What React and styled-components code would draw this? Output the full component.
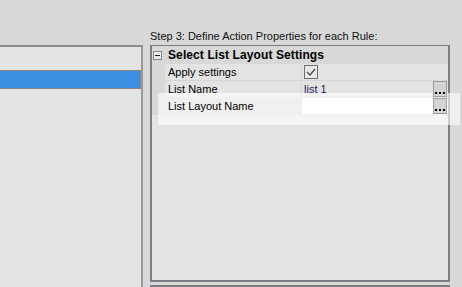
import React from "react";
import styled, { createGlobalStyle } from "styled-components";

const Global = createGlobalStyle`
  html, body {
    margin: 0;
    padding: 0;
    background: #d8d8d8;
    overflow: hidden;
  }
  body {
    font-family: "Liberation Sans", Arial, sans-serif;
    font-size: 11px;
    color: #000;
  }
`;

const Window = styled.div`
  position: relative;
  display: flex;
  align-items: flex-start;
  width: 462px;
  height: 287px;
  background: #d8d8d8;
  overflow: hidden;
`;

const RulesPanel = styled.div`
  flex-shrink: 0;
  margin-top: 45px;
  margin-left: -2px;
  width: 145px;
  height: 242px;
  background: #e3e3e3;
  border-top: 2px solid #8d8d8d;
  border-right: 2px solid #9a9a9a;
  box-sizing: border-box;
  padding-top: 23px;
`;

const RuleRow = styled.div`
  height: 19px;
  box-sizing: border-box;
  background: #3c8fe2;
  border: 1px dotted #e0762a;
`;

const PropertiesColumn = styled.div`
  flex-shrink: 0;
  display: flex;
  flex-direction: column;
  padding-left: 7px;
  width: 300px;
`;

const StepLabel = styled.div`
  flex-shrink: 0;
  height: 45px;
  box-sizing: border-box;
  padding-top: 30px;
  font-size: 11px;
  line-height: 13px;
  color: #111;
  white-space: nowrap;
`;

const Grid = styled.div`
  flex-shrink: 0;
  height: 237px;
  box-sizing: border-box;
  border: 2px solid #7b7d84;
  border-top-width: 1px;
  background: #e3e3e3;
`;

const NextBox = styled.div`
  flex-shrink: 0;
  margin-top: 3px;
  height: 10px;
  border: 2px solid #7b7d84;
  background: #e3e3e3;
`;

const Category = styled.div`
  display: flex;
  align-items: center;
  height: 18px;
  background: #d8d8d8;
  font-weight: bold;
  font-size: 12px;
  letter-spacing: 0.1px;
`;

const Toggle = styled.div`
  width: 7px;
  height: 7px;
  margin: 0 6px 0 1px;
  border: 1px solid #8a8a8a;
  background: #eaeaea;
  position: relative;
  &::after {
    content: "";
    position: absolute;
    left: 1px;
    top: 3px;
    width: 5px;
    height: 1px;
    background: #222;
  }
`;

const Row = styled.div`
  display: flex;
  height: 17px;
  padding-left: 13px;
  background: #d8d8d8;
`;

const NameCell = styled.div`
  width: 133px;
  padding-left: 3px;
  display: flex;
  align-items: center;
  background: ${(p) => (p.$lit ? "transparent" : "#e3e3e3")};
  border-bottom: 1px solid #d6d6d6;
  border-right: 1px solid #d6d6d6;
`;

const ValueCell = styled.div`
  flex: 1;
  display: flex;
  align-items: center;
  padding-left: 2px;
  padding-right: 1px;
  background: ${(p) => (p.$blank ? "#ffffff" : "#e3e3e3")};
  border-bottom: 1px solid #d6d6d6;
  color: #1d1a5c;
`;

const Label = styled.span`
  position: relative;
  z-index: 2;
`;

const Check = styled.div`
  width: 12px;
  height: 12px;
  border: 1px solid #6f6f6f;
  background: #e8e8e8;
  display: flex;
  align-items: center;
  justify-content: center;
`;

const Ellipsis = styled.div`
  position: relative;
  z-index: 2;
  margin-left: auto;
  width: 12px;
  height: 12px;
  border: 1px solid #9d9d9d;
  background: #d4d4d4;
  display: flex;
  align-items: flex-end;
  justify-content: center;
  gap: 2px;
  padding-bottom: 2px;
  box-sizing: content-box;
`;

const Dot = styled.span`
  width: 2px;
  height: 2px;
  background: #000;
`;

const Highlight = styled.div`
  position: absolute;
  z-index: 1;
  left: 158px;
  top: 93px;
  width: 302px;
  height: 32px;
  background: rgba(255, 255, 255, 0.6);
  pointer-events: none;
`;

const props = [
  { name: "Apply settings", kind: "check" },
  { name: "List Name", value: "list 1", kind: "text" },
  { name: "List Layout Name", value: "", kind: "text", lit: true },
];

export default function App() {
  return (
    <Window>
      <Global />
      <RulesPanel>
        <RuleRow />
      </RulesPanel>
      <PropertiesColumn>
        <StepLabel>Step 3: Define Action Properties for each Rule:</StepLabel>
        <Grid>
          <Category>
            <Toggle />
            Select List Layout Settings
          </Category>
          {props.map((p) => (
            <Row key={p.name}>
              <NameCell $lit={p.lit}>
                <Label>{p.name}</Label>
              </NameCell>
              <ValueCell $blank={p.kind === "text" && !p.value}>
                {p.kind === "check" ? (
                  <Check>
                    <svg width="10" height="8" viewBox="0 0 10 8">
                      <path d="M1 4 L4 7 L9 1" fill="none" stroke="#444" strokeWidth="1.2" />
                    </svg>
                  </Check>
                ) : (
                  <>
                    <Label>{p.value}</Label>
                    <Ellipsis>
                      <Dot />
                      <Dot />
                      <Dot />
                    </Ellipsis>
                  </>
                )}
              </ValueCell>
            </Row>
          ))}
        </Grid>
        <NextBox />
      </PropertiesColumn>
      <Highlight />
    </Window>
  );
}
